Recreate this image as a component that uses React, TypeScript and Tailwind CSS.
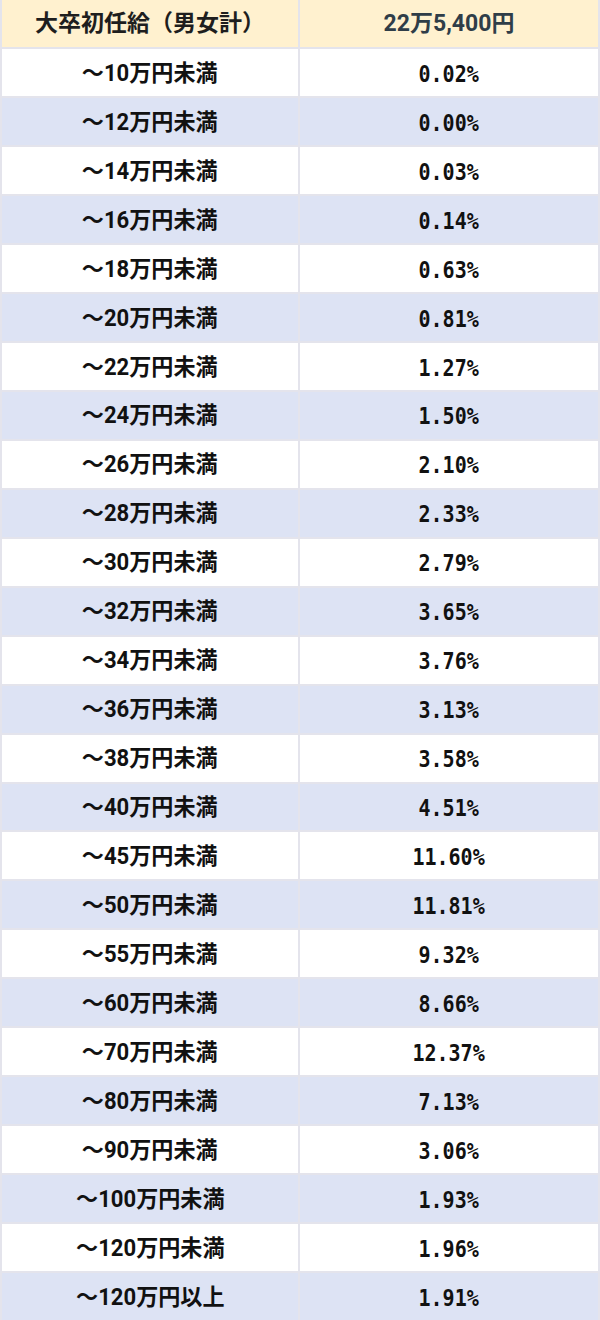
import React from "react";

const rows: [string, string][] = [
  ["～10万円未満", "0.02%"],
  ["～12万円未満", "0.00%"],
  ["～14万円未満", "0.03%"],
  ["～16万円未満", "0.14%"],
  ["～18万円未満", "0.63%"],
  ["～20万円未満", "0.81%"],
  ["～22万円未満", "1.27%"],
  ["～24万円未満", "1.50%"],
  ["～26万円未満", "2.10%"],
  ["～28万円未満", "2.33%"],
  ["～30万円未満", "2.79%"],
  ["～32万円未満", "3.65%"],
  ["～34万円未満", "3.76%"],
  ["～36万円未満", "3.13%"],
  ["～38万円未満", "3.58%"],
  ["～40万円未満", "4.51%"],
  ["～45万円未満", "11.60%"],
  ["～50万円未満", "11.81%"],
  ["～55万円未満", "9.32%"],
  ["～60万円未満", "8.66%"],
  ["～70万円未満", "12.37%"],
  ["～80万円未満", "7.13%"],
  ["～90万円未満", "3.06%"],
  ["～100万円未満", "1.93%"],
  ["～120万円未満", "1.96%"],
  ["～120万円以上", "1.91%"],
];

const jp = "font-['Roboto','Noto_Sans_CJK_JP',sans-serif]";
const mono = "font-['DejaVu_Sans_Mono','Noto_Sans_CJK_JP',monospace]";

export default function App() {
  return (
    <div className="flex h-[1320px] w-[600px] flex-col border-x-2 border-[#e4e4ec] bg-white">
      <div className="flex flex-1 border-b-2 border-[#e4e4ec] bg-[#fff1cf]">
        <div className={`flex w-1/2 items-center justify-center border-r-2 border-[#e4e4ec] pt-[2px] text-[23px] font-bold text-[#1e1e1e] ${jp}`}>
          大卒初任給（男女計）
        </div>
        <div className={`flex w-1/2 items-center justify-center pt-[2px] text-[23px] font-bold text-[#2f3d48] ${jp}`}>
          22万5,400円
        </div>
      </div>
      {rows.map(([label, value], i) => (
        <div
          key={label}
          className={`flex flex-1 ${i < rows.length - 1 ? "border-b-2" : ""} border-[#e4e4ec] ${i % 2 === 1 ? "bg-[#dde3f4]" : "bg-white"}`}
        >
          <div className={`flex w-1/2 items-center justify-center border-r-2 border-[#e4e4ec] pt-[3px] text-[23px] font-bold text-[#111] ${jp}`}>
            <span className="inline-block scale-x-[0.96]">{label}</span>
          </div>
          <div className={`flex w-1/2 items-center justify-center pt-[3px] text-[23px] font-bold text-[#111] ${mono}`}>
            <span className="inline-block scale-x-[0.87]">{value}</span>
          </div>
        </div>
      ))}
    </div>
  );
}
